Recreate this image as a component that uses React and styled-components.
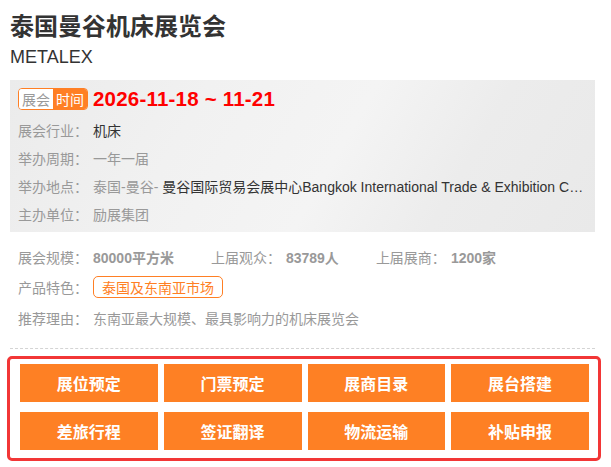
import React from "react";
import styled, { createGlobalStyle } from "styled-components";

const Global = createGlobalStyle`
  html, body { margin: 0; padding: 0; background: #fff; }
  body { font-family: "Liberation Sans", Arial, "Noto Sans CJK SC", sans-serif; }
  * { box-sizing: border-box; }
`;

const Page = styled.div`
  width: 611px;
  padding: 9px 10px 0 10px;
`;

const Title = styled.h1`
  margin: 0;
  font-size: 24px;
  line-height: 36px;
  font-weight: bold;
  color: #333;
`;

const SubTitle = styled.div`
  font-size: 18px;
  line-height: 24px;
  color: #333;
  margin-bottom: 11px;
`;

const InfoBox = styled.div`
  width: 585px;
  padding: 6px 8px 4px 8px;
  background: linear-gradient(120deg, #ebebeb 0%, #f1f1f1 30%, #f4f4f4 55%, #ececec 75%, #e9e9e9 100%);
`;

const DateRow = styled.div`
  display: flex;
  align-items: center;
  height: 26px;
  margin-bottom: 4px;
`;

const Badge = styled.div`
  display: flex;
  border: 1px solid #ff7f24;
  border-radius: 4px;
  overflow: hidden;
  height: 22px;
`;

const BadgeHalf = styled.span`
  width: 34px;
  display: flex;
  align-items: center;
  justify-content: center;
  font-size: 14px;
  font-family: "Noto Sans CJK SC", sans-serif;
  color: ${(p) => (p.$active ? "#fff" : "#999")};
  background: ${(p) => (p.$active ? "#ff7f24" : "#fff")};
`;

const DateText = styled.span`
  margin-left: 5px;
  font-size: 20.5px;
  font-weight: bold;
  color: #ff0000;
  letter-spacing: 0.2px;
`;

const Row = styled.div`
  display: flex;
  align-items: center;
  height: ${(p) => p.$h || 28}px;
  font-size: 14px;
  white-space: nowrap;
`;

const Label = styled.span`
  flex: none;
  width: 75px;
  color: #999;
`;

const Value = styled.span`
  color: ${(p) => (p.$dark ? "#333" : "#999")};
`;

const Ellipsis = styled.span`
  flex: 1;
  min-width: 0;
  overflow: hidden;
  text-overflow: ellipsis;
  color: #333;
`;

const Stats = styled.div`
  padding: 10px 8px 0 8px;
`;

const StatItem = styled.span`
  display: inline-flex;
  margin-right: 37px;
`;

const StatValue = styled.span`
  font-weight: bold;
  color: #999;
`;

const Tag = styled.span`
  display: inline-flex;
  align-items: center;
  height: 22px;
  padding: 0 8px;
  border: 1px solid #ff7f24;
  border-radius: 5px;
  color: #ff7f24;
  font-size: 14px;
`;

const Dashed = styled.div`
  margin-top: 14px;
  width: 585px;
  border-top: 1px dashed #d4d4d4;
`;

const ActionBox = styled.div`
  margin: 7px 0 0 -3px;
  width: 594px;
  border: 3px solid #f23636;
  border-radius: 5px;
  padding: 5px 9px 8px 10px;
  display: grid;
  grid-template-columns: repeat(4, 1fr);
  column-gap: 6px;
  row-gap: 10px;
`;

const ActionButton = styled.button`
  height: 38px;
  border: none;
  background: #fe8024;
  color: #fff;
  font-size: 16px;
  font-weight: bold;
  font-family: "Noto Sans CJK SC", sans-serif;
  padding: 0;
  cursor: pointer;
`;

const actions = ["展位预定", "门票预定", "展商目录", "展台搭建", "差旅行程", "签证翻译", "物流运输", "补贴申报"];

export default function App() {
  return (
    <Page>
      <Global />
      <Title>泰国曼谷机床展览会</Title>
      <SubTitle>METALEX</SubTitle>
      <InfoBox>
        <DateRow>
          <Badge>
            <BadgeHalf>展会</BadgeHalf>
            <BadgeHalf $active>时间</BadgeHalf>
          </Badge>
          <DateText>2026-11-18 ~ 11-21</DateText>
        </DateRow>
        <Row>
          <Label>展会行业：</Label>
          <Value $dark>机床</Value>
        </Row>
        <Row>
          <Label>举办周期：</Label>
          <Value>一年一届</Value>
        </Row>
        <Row>
          <Label>举办地点：</Label>
          <Ellipsis>
            <Value>泰国-曼谷- </Value>曼谷国际贸易会展中心Bangkok International Trade &amp; Exhibition C…
          </Ellipsis>
        </Row>
        <Row>
          <Label>主办单位：</Label>
          <Value>励展集团</Value>
        </Row>
      </InfoBox>
      <Stats>
        <Row $h={30}>
          <StatItem>
            <Label>展会规模：</Label>
            <StatValue>80000平方米</StatValue>
          </StatItem>
          <StatItem>
            <Label>上届观众：</Label>
            <StatValue>83789人</StatValue>
          </StatItem>
          <StatItem>
            <Label>上届展商：</Label>
            <StatValue>1200家</StatValue>
          </StatItem>
        </Row>
        <Row $h={30}>
          <Label>产品特色：</Label>
          <Tag>泰国及东南亚市场</Tag>
        </Row>
        <Row $h={32}>
          <Label>推荐理由：</Label>
          <Value>东南亚最大规模、最具影响力的机床展览会</Value>
        </Row>
      </Stats>
      <Dashed />
      <ActionBox>
        {actions.map((a) => (
          <ActionButton key={a}>{a}</ActionButton>
        ))}
      </ActionBox>
    </Page>
  );
}
